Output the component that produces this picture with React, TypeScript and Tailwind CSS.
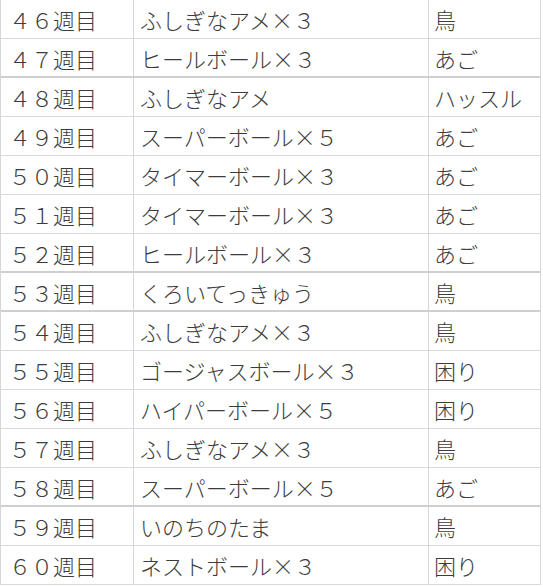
const rows: [string, string, string, boolean][] = [
  ["４６週目", "ふしぎなアメ×３", "鳥", false],
  ["４７週目", "ヒールボール×３", "あご", true],
  ["４８週目", "ふしぎなアメ", "ハッスル", false],
  ["４９週目", "スーパーボール×５", "あご", false],
  ["５０週目", "タイマーボール×３", "あご", false],
  ["５１週目", "タイマーボール×３", "あご", false],
  ["５２週目", "ヒールボール×３", "あご", true],
  ["５３週目", "くろいてっきゅう", "鳥", true],
  ["５４週目", "ふしぎなアメ×３", "鳥", false],
  ["５５週目", "ゴージャスボール×３", "困り", false],
  ["５６週目", "ハイパーボール×５", "困り", false],
  ["５７週目", "ふしぎなアメ×３", "鳥", false],
  ["５８週目", "スーパーボール×５", "あご", true],
  ["５９週目", "いのちのたま", "鳥", false],
  ["６０週目", "ネストボール×３", "困り", false],
];

export default function App() {
  return (
    <div className="w-[543px] h-[587px] bg-white overflow-hidden">
      <div
        className="w-[541px] border-l border-r border-[#d6d6d6] text-[#3c3c3c] text-[22px] font-light leading-none"
        style={{ fontFamily: '"Noto Sans CJK JP", "Noto Sans", sans-serif' }}
      >
        {rows.map(([week, item, note, thick]) => (
          <div
            key={week}
            className={
              thick
                ? "grid grid-cols-[133px_295px_1fr] h-[39px] border-b-2 border-[#cfcfcf]"
                : "grid grid-cols-[133px_295px_1fr] h-[39px] border-b border-[#dadada]"
            }
          >
            <div className="flex items-center pl-[8px] border-r border-[#d6d6d6]">{week}</div>
            <div className="flex items-center pl-[6px] border-r border-[#d6d6d6]">{item}</div>
            <div className="flex items-center pl-[5px]">{note}</div>
          </div>
        ))}
      </div>
    </div>
  );
}
